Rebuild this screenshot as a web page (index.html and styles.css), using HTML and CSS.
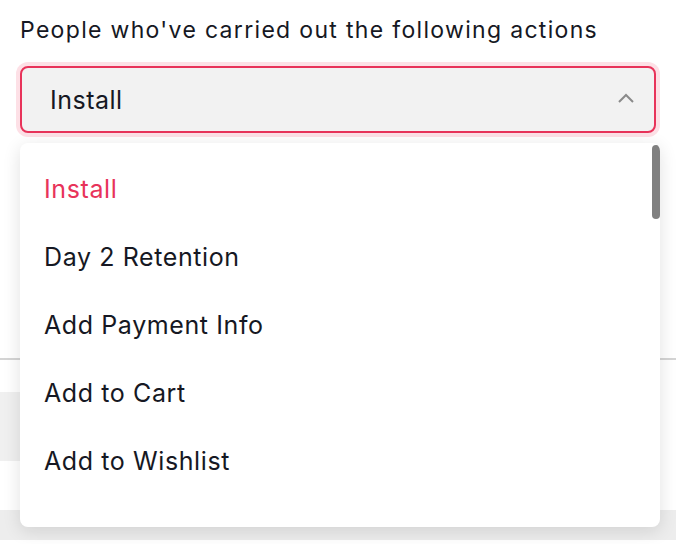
FILE: index.html
```html
<!DOCTYPE html>
<html>
<head>
<meta charset="utf-8">
<link rel="stylesheet" href="styles.css">
</head>
<body>
<div class="page">
  <div class="label">People who've carried out the following actions</div>
  <div class="select-wrap">
    <div class="select">
      <span class="value">Install</span>
      <svg class="chev" width="18" height="10" viewBox="0 0 18 10"><path d="M2 9 L9 2 L16 9" fill="none" stroke="#8a8a8a" stroke-width="2"/></svg>
    </div>
    <div class="menu">
      <div class="list">
        <div class="item active">Install</div>
        <div class="item">Day 2 Retention</div>
        <div class="item">Add Payment Info</div>
        <div class="item">Add to Cart</div>
        <div class="item">Add to Wishlist</div>
      </div>
      <div class="thumb"></div>
    </div>
  </div>
  <div class="under">
    <div class="divider"></div>
    <div class="field"></div>
    <div class="field2"></div>
  </div>
</div>
</body>
</html>
```
FILE: styles.css
```css
html, body { margin: 0; padding: 0; background: #fff; }
body { font-family: "Inter", "Open Sans", sans-serif; color: #161823; width: 676px; height: 544px; overflow: hidden; }
.page { padding: 15px 0 0 0; }
.label { font-size: 23px; line-height: 30px; padding-left: 20px; letter-spacing: 1.32px; }
.select-wrap { position: relative; margin: 21px 16px 0 16px; }
.select {
  margin: 3px 4px;
  height: 67px; box-sizing: border-box;
  border: 2px solid #e8335a; border-radius: 8px;
  background: #f2f2f2;
  box-shadow: 0 0 0 4px #fde0e6;
  display: flex; align-items: center; justify-content: space-between;
  padding: 0 19px 0 28px;
}
.value { font-size: 25px; letter-spacing: 0.5px; color: #161823; }
.chev { margin-top: -3px; }
.menu {
  position: absolute; left: 4px; top: 77px; width: 640px;
  height: 384px; background: #fff; border-radius: 8px;
  box-shadow: 0 4px 18px rgba(0,0,0,0.12);
  overflow: hidden; z-index: 2;
}
.list { padding-top: 12px; }
.item { height: 68px; line-height: 68px; padding-left: 24px; font-size: 25px; letter-spacing: 0.6px; color: #161823; }
.item.active { color: #e8335a; }
.thumb { position: absolute; right: 0; top: 2px; width: 8px; height: 74px; border-radius: 4px; background: #808080; }
.divider { height: 2px; background: #d4d4d4; margin-top: 225px; }
.field { height: 69px; background: #f0f0f0; margin-top: 32px; width: 640px; }
.field2 { height: 30px; background: #ededed; margin-top: 49px; }
```
